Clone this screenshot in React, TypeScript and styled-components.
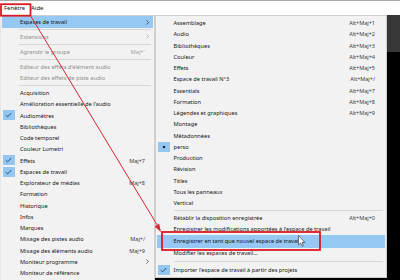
import styled, { createGlobalStyle } from 'styled-components'

const GlobalStyle = createGlobalStyle`
  html, body {
    margin: 0;
    padding: 0;
    width: 400px;
    height: 280px;
    overflow: hidden;
    background: #000;
    font-family: 'Noto Sans', 'Open Sans', sans-serif;
  }
`

type Entry =
  | { sep: true; gap?: number }
  | {
      sep?: false
      label: string
      shortcut?: string
      arrow?: boolean
      disabled?: boolean
      active?: boolean
      mark?: 'check' | 'dot'
      tall?: boolean
    }

const mainItems: Entry[] = [
  { label: 'Espaces de travail', arrow: true, active: true },
  { sep: true },
  { label: 'Extensions', arrow: true, disabled: true },
  { sep: true },
  { label: 'Agrandir le groupe', shortcut: 'Maj+`', disabled: true },
  { sep: true },
  { label: "Editeur des effets d'élément audio", disabled: true },
  { label: 'Editeur des effets de piste audio', disabled: true },
  { sep: true },
  { label: 'Acquisition' },
  { label: "Amélioration essentielle de l'audio" },
  { label: 'Audiomètres', mark: 'check' },
  { label: 'Bibliothèques' },
  { label: 'Code temporel' },
  { label: 'Couleur Lumetri' },
  { label: 'Effets', shortcut: 'Maj+7', mark: 'check' },
  { label: 'Espaces de travail', mark: 'check' },
  { label: 'Explorateur de médias', shortcut: 'Maj+8' },
  { label: 'Formation' },
  { label: 'Historique' },
  { label: 'Infos' },
  { label: 'Marques' },
  { label: 'Mixage des pistes audio', shortcut: 'Maj+/' },
  { label: 'Mixage des éléments audio', shortcut: 'Maj+9' },
  { label: 'Moniteur programme', arrow: true },
  { label: 'Moniteur de référence' },
]

const workspaceItems: Entry[] = [
  { label: 'Assemblage', shortcut: 'Alt+Maj+1' },
  { label: 'Audio', shortcut: 'Alt+Maj+2' },
  { label: 'Bibliothèques', shortcut: 'Alt+Maj+3' },
  { label: 'Couleur', shortcut: 'Alt+Maj+4' },
  { label: 'Effets', shortcut: 'Alt+Maj+5' },
  { label: 'Espace de travail N°3', shortcut: 'Alt+Maj+/' },
  { label: 'Essentials', shortcut: 'Alt+Maj+7' },
  { label: 'Formation', shortcut: 'Alt+Maj+8' },
  { label: 'Légendes et graphiques', shortcut: 'Alt+Maj+9' },
  { label: 'Montage' },
  { label: 'Métadonnées' },
  { label: 'perso', mark: 'dot' },
  { label: 'Production' },
  { label: 'Révision' },
  { label: 'Titles' },
  { label: 'Tous les panneaux' },
  { label: 'Vertical' },
  { sep: true },
  { label: 'Rétablir la disposition enregistrée', shortcut: 'Alt+Maj+0' },
  { label: "Enregistrer les modifications apportées à l'espace de travail" },
  { label: 'Enregistrer en tant que nouvel espace de travail...', active: true, tall: true },
  { label: 'Modifier les espaces de travail...' },
  { sep: true, gap: 5.7 },
  { label: "Importer l'espace de travail à partir des projets", mark: 'check' },
]

const Page = styled.div`
  position: relative;
  width: 400px;
  height: 280px;
  display: flex;
  flex-direction: column;
  overflow: hidden;
`

const MenuBar = styled.div`
  height: 14px;
  flex: none;
  background: #fff;
  border-top: 1px solid #a9a9a9;
  display: flex;
  align-items: center;
  padding-left: 4px;
  gap: 6px;
  font-size: 5.9px;
  color: #111;
`

const BarItem = styled.span`
  line-height: 10px;
`

const Desktop = styled.div`
  flex: 1;
  display: flex;
  align-items: flex-start;
  min-height: 0;
  overflow: hidden;
`

const Menu = styled.div<{ $width: number; $textLeft: number; $padRight: number; $padTop: number }>`
  width: ${(p) => p.$width}px;
  flex: none;
  box-sizing: border-box;
  background: #f2f2f2;
  border: 1px solid #cfcfcf;
  padding: ${(p) => p.$padTop}px 1px 1px;
  --text-left: ${(p) => p.$textLeft}px;
  --pad-right: ${(p) => p.$padRight}px;
`

const MainMenu = styled(Menu)`
  align-self: stretch;
  overflow: hidden;
  border-left-color: #e6e6e6;
  border-bottom: none;
`

const Row = styled.div<{ $active?: boolean; $disabled?: boolean; $tall?: boolean }>`
  position: relative;
  height: ${(p) => (p.$tall ? 13 : 11.25)}px;
  display: flex;
  align-items: center;
  padding-left: var(--text-left);
  padding-right: var(--pad-right);
  background: ${(p) => (p.$active ? '#96c8f4' : 'transparent')};
  color: ${(p) => (p.$disabled ? '#8e8e8e' : '#141414')};
  font-size: 5.65px;
  white-space: nowrap;
`

const Label = styled.span`
  flex: 1;
`

const Shortcut = styled.span<{ $disabled?: boolean }>`
  color: ${(p) => (p.$disabled ? '#a0a0a0' : '#3a3a3a')};
  font-size: 5.5px;
`

const Arrow = styled.svg`
  position: absolute;
  right: 4.5px;
  width: 3px;
  height: 5px;
`

const Mark = styled.span`
  position: absolute;
  left: 1px;
  top: 0.6px;
  width: 11.5px;
  height: 10px;
  background: #93c7f2;
  display: flex;
  align-items: center;
  justify-content: center;
`

const Separator = styled.div<{ $gap: number }>`
  height: 1px;
  background: #d6d6d6;
  margin: ${(p) => (p.$gap - 1) / 2}px 2px ${(p) => (p.$gap - 1) / 2}px 17px;
`

const SideArea = styled.div`
  flex: 1;
  align-self: stretch;
  display: flex;
  flex-direction: column;
`

const DarkPanel = styled.div`
  height: 37px;
  background: #373737;
`

const Overlay = styled.svg`
  position: absolute;
  left: 0;
  top: 0;
  pointer-events: none;
`

const MarkGlyph = ({ kind }: { kind: 'check' | 'dot' }) =>
  kind === 'check' ? (
    <svg width="7" height="6" viewBox="0 0 7 6">
      <path d="M0.8 3.1 L2.7 4.9 L6.2 1" fill="none" stroke="#23466e" strokeWidth="0.9" />
    </svg>
  ) : (
    <svg width="4" height="4" viewBox="0 0 4 4">
      <circle cx="2" cy="2" r="1.3" fill="#1f2f44" />
    </svg>
  )

const MenuList = ({ items }: { items: Entry[] }) => (
  <>
    {items.map((it, i) => {
      if (it.sep) return <Separator key={i} $gap={it.gap ?? 3.7} />
      return (
        <Row key={i} $active={it.active} $disabled={it.disabled} $tall={it.tall}>
          {it.mark && (
            <Mark>
              <MarkGlyph kind={it.mark} />
            </Mark>
          )}
          <Label>{it.label}</Label>
          {it.shortcut && <Shortcut $disabled={it.disabled}>{it.shortcut}</Shortcut>}
          {it.arrow && (
            <Arrow viewBox="0 0 3 5">
              <path d="M0.4 0.4 L2.5 2.5 L0.4 4.6" fill="none" stroke={it.disabled ? '#a8a8a8' : '#333'} strokeWidth="0.7" />
            </Arrow>
          )}
        </Row>
      )
    })}
  </>
)

export default function App() {
  return (
    <>
      <GlobalStyle />
      <Page>
        <MenuBar>
          <BarItem>Fenêtre</BarItem>
          <BarItem>Aide</BarItem>
        </MenuBar>
        <Desktop>
          <MainMenu $width={155} $textLeft={18} $padRight={8} $padTop={0.4}>
            <MenuList items={mainItems} />
          </MainMenu>
          <Menu $width={232} $textLeft={16.5} $padRight={10} $padTop={1.4}>
            <MenuList items={workspaceItems} />
          </Menu>
          <SideArea>
            <DarkPanel />
          </SideArea>
        </Desktop>

        <Overlay width="400" height="280" viewBox="0 0 400 280">
          <rect x="1" y="4.2" width="29.5" height="11.5" fill="none" stroke="#dc1a22" strokeWidth="1.8" />
          <rect x="162" y="232" width="158" height="18" fill="none" stroke="#dc1a22" strokeWidth="1.8" />
          <line x1="31" y1="16.5" x2="157.5" y2="225.5" stroke="#d8262c" strokeWidth="1" />
          <path d="M161 232 L154.6 226.5 L159.2 223.7 Z" fill="#d8262c" />
          <path
            d="M298.5 235.5 L298.5 245 L300.6 243 L302 246.2 L303.4 245.6 L302 242.5 L304.8 242.4 Z"
            fill="#fff"
            stroke="#222"
            strokeWidth="0.6"
            strokeLinejoin="round"
          />
        </Overlay>
      </Page>
    </>
  )
}
